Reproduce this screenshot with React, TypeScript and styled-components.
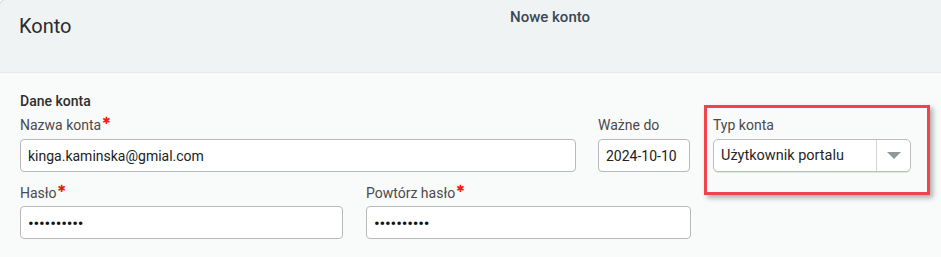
import React from "react";
import styled, { createGlobalStyle } from "styled-components";

const Global = createGlobalStyle`
  html, body { margin: 0; padding: 0; background: #ffffff; }
  body { font-family: Roboto, "Liberation Sans", Arial, sans-serif; overflow: hidden; }
  * { box-sizing: border-box; }
`;

const Frame = styled.div`
  width: 943px;
  height: 259px;
  margin: -1px 0 0 -1px;
  border: 1px solid #c9cdd0;
  border-top-left-radius: 7px;
  overflow: hidden;
  background: #f9fafa;
  display: flex;
  flex-direction: column;
`;

const Header = styled.header`
  height: 73px;
  flex: none;
  background: #f0f3f4;
  border-bottom: 1px solid #e5e8e9;
  display: grid;
  grid-template-columns: 491px auto;
  padding-left: 19px;
`;

const PageTitle = styled.h1`
  margin: 0;
  padding-top: 14px;
  font-size: 20px;
  font-weight: 400;
  color: #2b2b2b;
  line-height: 24px;
`;

const Subtitle = styled.div`
  padding-top: 8px;
  font-size: 15px;
  font-weight: 500;
  color: #3b4754;
  line-height: 18px;
`;

const Body = styled.section`
  flex: 1;
  padding: 20px 0 0 20px;
  display: flex;
  flex-direction: column;
`;

const SectionTitle = styled.h2`
  margin: 0 0 7px 0;
  font-size: 14px;
  font-weight: 500;
  color: #2e2e2e;
  line-height: 16px;
`;

const Row = styled.div<{ $gap?: number }>`
  display: flex;
  gap: 22px;
  margin-bottom: 12px;
  --field-gap: ${(p) => p.$gap ?? 5}px;
`;

const Field = styled.div<{ $w: number }>`
  width: ${(p) => p.$w}px;
  flex: none;
  display: flex;
  flex-direction: column;
  gap: var(--field-gap);
  position: relative;
`;

const Label = styled.label`
  font-size: 14px;
  color: #4a4a4a;
  line-height: 18px;
  display: flex;
  align-items: flex-start;
  white-space: nowrap;
`;

const Star = styled.span`
  color: #f21b0e;
  font-family: "DejaVu Sans", sans-serif;
  font-size: 10px;
  font-weight: 700;
  line-height: 12px;
  margin-left: 1px;
  margin-top: -1px;
`;

const Input = styled.input`
  width: 100%;
  height: 33px;
  border: 1px solid #b9b9b9;
  border-radius: 4px;
  background: #ffffff;
  padding: 0 7px;
  font-family: Roboto, "Liberation Sans", Arial, sans-serif;
  font-size: 14px;
  color: #222222;
  outline: none;
  &[type="password"] {
    font-size: 17px;
    letter-spacing: -0.2px;
    color: #111;
  }
`;

const Select = styled.div`
  height: 33px;
  border: 1px solid #bdbdbd;
  border-radius: 5px;
  background: #ffffff;
  display: flex;
  align-items: stretch;
  box-shadow: 0 2px 0 -1px rgba(150, 210, 160, 0.35);
`;

const SelectValue = styled.div`
  flex: 1;
  display: flex;
  align-items: center;
  padding-left: 7px;
  font-size: 14.5px;
  color: #262626;
`;

const SelectToggle = styled.div`
  width: 34px;
  border-left: 1px solid #d3d3d3;
  display: flex;
  align-items: center;
  justify-content: center;
`;

const Highlight = styled.div`
  position: absolute;
  left: -9px;
  top: -11px;
  width: 226px;
  height: 90px;
  border: 3px solid #f2434a;
  box-shadow: 3px 3px 5px rgba(0, 0, 0, 0.3);
  pointer-events: none;
`;

export default function App() {
  return (
    <>
      <Global />
      <Frame>
        <Header>
          <PageTitle>Konto</PageTitle>
          <Subtitle>Nowe konto</Subtitle>
        </Header>
        <Body>
          <SectionTitle>Dane konta</SectionTitle>
          <Row>
            <Field $w={556}>
              <Label>
                Nazwa konta<Star>✱</Star>
              </Label>
              <Input readOnly value="kinga.kaminska@gmial.com" />
            </Field>
            <Field $w={92}>
              <Label>Ważne do</Label>
              <Input readOnly value="2024-10-10" />
            </Field>
            <Field $w={198} style={{ marginLeft: 1 }}>
              <Label>Typ konta</Label>
              <Select>
                <SelectValue>Użytkownik portalu</SelectValue>
                <SelectToggle>
                  <svg width="14" height="7" viewBox="0 0 14 7">
                    <path d="M0 0 L14 0 L7 7 Z" fill="#8d9a9a" />
                  </svg>
                </SelectToggle>
              </Select>
              <Highlight />
            </Field>
          </Row>
          <Row $gap={4}>
            <Field $w={323}>
              <Label>
                Hasło<Star>✱</Star>
              </Label>
              <Input type="password" readOnly value="abcdefghij" />
            </Field>
            <Field $w={325} style={{ marginLeft: 1 }}>
              <Label>
                Powtórz hasło<Star>✱</Star>
              </Label>
              <Input type="password" readOnly value="abcdefghij" />
            </Field>
          </Row>
        </Body>
      </Frame>
    </>
  );
}
